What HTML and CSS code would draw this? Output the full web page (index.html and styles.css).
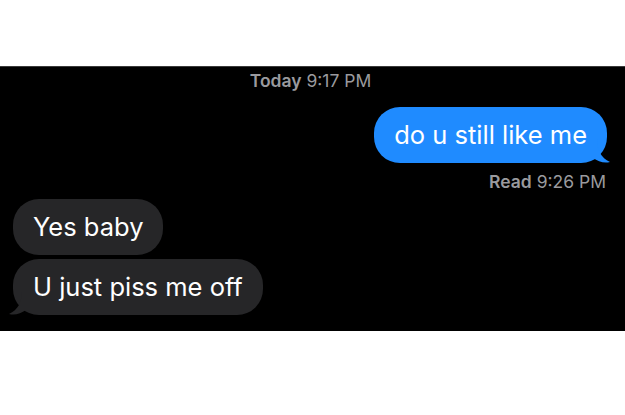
FILE: index.html
```html
<!DOCTYPE html>
<html lang="en">
<head>
    <meta charset="UTF-8">
    <meta name="viewport" content="width=device-width, initial-scale=1.0">
    <title>Messages</title>
    <link rel="stylesheet" href="styles.css">
</head>
<body>
    <div class="chat">
        <div class="stamp"><b>Today</b> 9:17 PM</div>

        <div class="row sent">
            <div class="bubble blue">
                do u still like me
                <svg class="tail tail-right" width="22" height="24" viewBox="0 0 22 24">
                    <path d="M0 0 L4 0 C4 11 8 19 17 23 C11 24.5 5 22.5 0 19 Z" fill="#1f8bff"/>
                </svg>
            </div>
        </div>
        <div class="receipt"><b>Read</b> 9:26 PM</div>

        <div class="row received">
            <div class="bubble gray">Yes baby</div>
        </div>
        <div class="row received">
            <div class="bubble gray">
                U just piss me off
                <svg class="tail tail-left" width="22" height="24" viewBox="0 0 22 24">
                    <path d="M22 0 L18 0 C18 11 14 19 5 23 C11 24.5 17 22.5 22 19 Z" fill="#262628"/>
                </svg>
            </div>
        </div>
    </div>
</body>
</html>
```

FILE: styles.css
```css
body {
    margin: 0;
    background-color: #ffffff;
    font-family: Inter, "Liberation Sans", Arial, sans-serif;
}

.chat {
    margin-top: 66px;
    height: 265px;
    background-color: #000000;
    border-top: 1px solid #3a3a3a;
    box-sizing: border-box;
    padding-top: 4px;
    display: flex;
    flex-direction: column;
}

.stamp {
    text-align: center;
    color: #9a9a9e;
    font-size: 17.5px;
    line-height: 20px;
    padding-right: 4px;
}

.stamp b,
.receipt b {
    font-weight: 600;
}

.row {
    display: flex;
}

.sent {
    justify-content: flex-end;
    padding-right: 18px;
    margin-top: 16px;
}

.received {
    padding-left: 13px;
}

.bubble {
    position: relative;
    height: 56px;
    box-sizing: border-box;
    padding: 0 20px;
    border-radius: 26px;
    font-size: 25.5px;
    line-height: 55px;
    color: #ffffff;
    white-space: nowrap;
}

.blue {
    background-color: #1f8bff;
}

.gray {
    background-color: #262628;
}

.receipt {
    text-align: right;
    color: #9a9a9e;
    font-size: 17.5px;
    line-height: 20px;
    padding-right: 19px;
    margin-top: 9px;
}

.received:first-of-type,
.receipt + .received {
    margin-top: 7px;
}

.received + .received {
    margin-top: 4px;
}

.tail {
    position: absolute;
    bottom: 0;
}

.tail-right {
    right: -8px;
}

.tail-left {
    left: -9px;
}
```
